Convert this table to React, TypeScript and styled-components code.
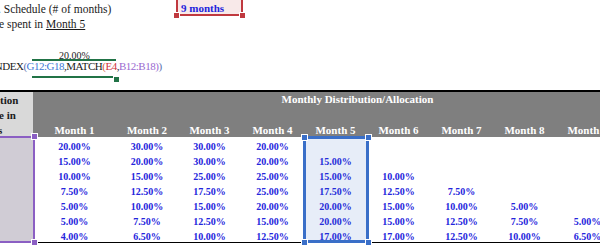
import React from 'react';
import styled, { createGlobalStyle } from 'styled-components';

const GlobalStyle = createGlobalStyle`
  html, body {
    margin: 0;
    padding: 0;
    background: #fff;
  }
  body {
    width: 600px;
    height: 250px;
    overflow: hidden;
    font-family: "Liberation Serif", "Times New Roman", serif;
    color: #1b1b1b;
  }
`;

// spreadsheet columns A..K (A is mostly scrolled off to the left)
const COLS = '33px 83px 62px repeat(8, 63px)';
const BLUE_TEXT = '#2424dc';

const Sheet = styled.div`
  width: 682px;
  display: flex;
  flex-direction: column;
`;

const TopArea = styled.div`
  display: grid;
  grid-template-columns: ${COLS};
  grid-template-rows: 16px repeat(4, 15px) 14px;
`;

const Label = styled.div<{ $row: number; $shift?: number }>`
  grid-column: 1 / 5;
  grid-row: ${({ $row }) => $row};
  align-self: end;
  margin-left: ${({ $shift }) => $shift ?? 0}px;
  font-size: 11.5px;
  line-height: 14px;
  white-space: nowrap;
`;

const Underlined = styled.span`
  text-decoration: underline;
  text-underline-offset: 1px;
`;

const InputBox = styled.div`
  position: relative;
  grid-column: 4;
  grid-row: 1;
  margin: -4px -2px 0 -2px;
  border: 2px solid #c0393f;
  background: #f8e9e9;
  display: flex;
  align-items: flex-end;
  padding-left: 3px;
  font-size: 11px;
  font-weight: bold;
  line-height: 11px;
  color: ${BLUE_TEXT};
`;

const ValueCell = styled.div<{ $row: number; $col: number }>`
  grid-column: ${({ $col }) => $col};
  grid-row: ${({ $row }) => $row};
  display: flex;
  align-items: flex-end;
  justify-content: center;
  font-size: 10px;
  line-height: 11px;
`;

const Formula = styled.div`
  grid-column: 1 / 8;
  grid-row: 5;
  align-self: start;
  margin-left: -14px;
  font-size: 11px;
  letter-spacing: -0.5px;
  line-height: 11px;
  white-space: nowrap;
  position: relative;
  z-index: 1;
`;

const Ref = styled.span<{ $color: string }>`
  color: ${({ $color }) => $color};
`;

const Selection = styled.div<{
  $col: string;
  $row: string;
  $color: string;
  $bw: number;
  $margin: string;
  $fill?: string;
  $sides?: string;
}>`
  position: relative;
  grid-column: ${({ $col }) => $col};
  grid-row: ${({ $row }) => $row};
  margin: ${({ $margin }) => $margin};
  border-style: solid;
  border-color: ${({ $color }) => $color};
  border-width: ${({ $bw, $sides }) => $sides ?? `${$bw}px`};
  background: ${({ $fill }) => $fill ?? 'transparent'};
  pointer-events: none;
  z-index: 2;
`;

const Handle = styled.span<{ $color: string; $x: 'left' | 'right'; $y: 'top' | 'bottom'; $ox: number; $oy: number }>`
  position: absolute;
  width: 5px;
  height: 5px;
  background: ${({ $color }) => $color};
  outline: 1px solid #fff;
  ${({ $x, $ox }) => `${$x}: ${-$ox - 3}px;`}
  ${({ $y, $oy }) => `${$y}: ${-$oy - 3}px;`}
`;

const Table = styled.div`
  display: grid;
  grid-template-columns: ${COLS};
  grid-template-rows: repeat(10, 15px);
  border-top: 2px solid #000;
  border-bottom: 1px solid #000;
`;

const CornerHead = styled.div`
  grid-column: 1;
  grid-row: 1 / 4;
  background: #d9d9d9;
  padding-top: 1px;
  font-size: 11px;
  font-weight: bold;
  line-height: 15px;
  white-space: nowrap;
  overflow: hidden;
`;

const CornerLine = styled.div<{ $shift: number }>`
  margin-left: ${({ $shift }) => $shift}px;
`;

const HeadBand = styled.div<{ $row: number }>`
  grid-column: 2 / 12;
  grid-row: ${({ $row }) => $row};
  background: #7f7f7f;
  color: #fff;
  display: flex;
  align-items: flex-end;
  justify-content: center;
  font-size: 11px;
  font-weight: bold;
  line-height: 15px;
  white-space: nowrap;
`;

const MonthHead = styled.div<{ $col: number }>`
  grid-column: ${({ $col }) => $col};
  grid-row: 3;
  background: #7f7f7f;
  color: #fff;
  display: flex;
  align-items: flex-end;
  justify-content: center;
  font-size: 11px;
  font-weight: bold;
  line-height: 13px;
  white-space: nowrap;
`;

const SideBlock = styled.div`
  grid-column: 1;
  grid-row: 4 / 11;
  background: #d0ccd5;
`;

const DataCell = styled.div<{ $row: number; $col: number }>`
  grid-column: ${({ $col }) => $col};
  grid-row: ${({ $row }) => $row};
  display: flex;
  align-items: flex-end;
  justify-content: center;
  font-size: 10px;
  font-weight: bold;
  line-height: 11px;
  color: ${BLUE_TEXT};
  white-space: nowrap;
`;

const schedule: string[][] = [
  ['20.00%', '30.00%', '30.00%', '20.00%'],
  ['15.00%', '20.00%', '30.00%', '20.00%', '15.00%'],
  ['10.00%', '15.00%', '25.00%', '25.00%', '15.00%', '10.00%'],
  ['7.50%', '12.50%', '17.50%', '25.00%', '17.50%', '12.50%', '7.50%'],
  ['5.00%', '10.00%', '15.00%', '20.00%', '20.00%', '15.00%', '10.00%', '5.00%'],
  ['5.00%', '7.50%', '12.50%', '15.00%', '20.00%', '15.00%', '12.50%', '7.50%', '5.00%'],
  ['4.00%', '6.50%', '10.00%', '12.50%', '17.00%', '17.00%', '12.50%', '10.00%', '6.50%', '4.00%'],
];

const months = Array.from({ length: 10 }, (_, i) => `Month ${i + 1}`);

const RED = '#c0393f';
const GREEN = '#217346';
const PURPLE = '#8b5fc3';
const SEL_BLUE = '#3a6fc8';

const App: React.FC = () => (
  <>
    <GlobalStyle />
    <Sheet>
      <TopArea>
        <Label $row={1} $shift={-2}>. Schedule (# of months)</Label>
        <InputBox>
          9 months
          <Handle $color={RED} $x="left" $y="bottom" $ox={1} $oy={1} />
          <Handle $color={RED} $x="right" $y="bottom" $ox={1} $oy={1} />
        </InputBox>
        <Label $row={2} $shift={-1}>
          e spent in <Underlined>Month 5</Underlined>
        </Label>
        <ValueCell $row={4} $col={2}>20.00%</ValueCell>
        <Formula>
          =INDEX<Ref $color="#5a6fb0">(</Ref>
          <Ref $color="#3f78d6">G12:G18</Ref>,MATCH<Ref $color="#d9543a">(</Ref>
          <Ref $color="#d2343a">E4</Ref>,<Ref $color="#9a6ad0">B12:B18</Ref>
          <Ref $color="#9a6ad0">)</Ref>
          <Ref $color="#5a6fb0">)</Ref>
        </Formula>
        <Selection
          $col="2"
          $row="5"
          $color={GREEN}
          $bw={2}
          $sides="2px 0 2px 0"
          $margin="-2px 0 -2px -1px"
        >
          <Handle $color={GREEN} $x="right" $y="bottom" $ox={-0.5} $oy={2.5} />
        </Selection>
      </TopArea>

      <Table>
        <CornerHead>
          <CornerLine $shift={0}>tion</CornerLine>
          <CornerLine $shift={-1}>e in</CornerLine>
          <CornerLine $shift={-2}>s</CornerLine>
        </CornerHead>
        <HeadBand $row={1}>Monthly Distribution/Allocation</HeadBand>
        <HeadBand $row={2} />
        {months.map((m, i) => (
          <MonthHead key={m} $col={i + 2}>
            {m}
          </MonthHead>
        ))}
        <SideBlock />
        {schedule.map((row, r) =>
          row.map((v, c) => (
            <DataCell key={`${r}-${c}`} $row={r + 4} $col={c + 2}>
              {v}
            </DataCell>
          )),
        )}
        <Selection $col="1" $row="4 / 11" $color={PURPLE} $bw={2} $margin="-1px -2px -1px -2px">
          <Handle $color={PURPLE} $x="right" $y="top" $ox={1} $oy={1} />
          <Handle $color={PURPLE} $x="right" $y="bottom" $ox={1} $oy={1} />
        </Selection>
        <Selection
          $col="6"
          $row="4 / 11"
          $color={SEL_BLUE}
          $bw={3}
          $margin="-1px -2px -1px -1px"
          $fill="rgba(58, 111, 200, 0.12)"
        >
          <Handle $color={SEL_BLUE} $x="left" $y="top" $ox={1.5} $oy={1.5} />
          <Handle $color={SEL_BLUE} $x="right" $y="top" $ox={1.5} $oy={1.5} />
          <Handle $color={SEL_BLUE} $x="left" $y="bottom" $ox={1.5} $oy={1.5} />
          <Handle $color={SEL_BLUE} $x="right" $y="bottom" $ox={1.5} $oy={1.5} />
        </Selection>
      </Table>
    </Sheet>
  </>
);

export default App;
